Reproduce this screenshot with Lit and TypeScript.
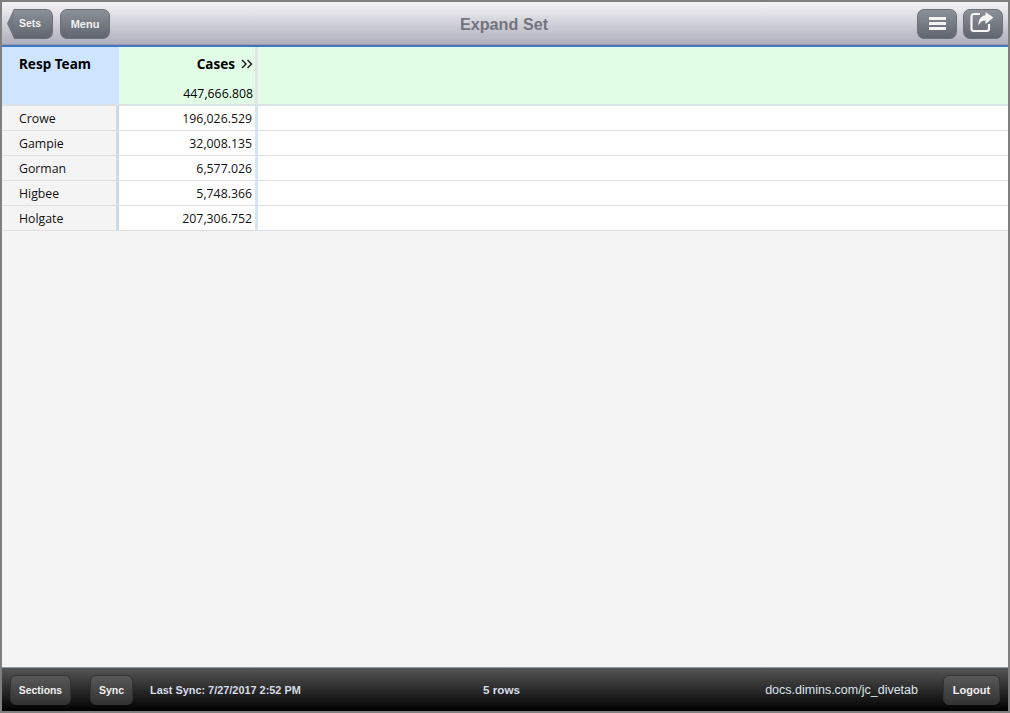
import { LitElement, html, css } from "lit";
import { customElement } from "lit/decorators.js";

const rows = [
  ["Crowe", "196,026.529"],
  ["Gampie", "32,008.135"],
  ["Gorman", "6,577.026"],
  ["Higbee", "5,748.366"],
  ["Holgate", "207,306.752"],
];

@customElement("app-root")
export class AppRoot extends LitElement {
  static styles = css`
    :host { display: flex; flex-direction: column; box-sizing: border-box; width: 1010px; height: 713px; border: 2px solid #7f7f7f; background: #f4f4f4; font-family: "Open Sans", "Noto Sans", sans-serif; overflow: hidden; }
    .top { height: 43px; flex: none; display: flex; align-items: center; justify-content: space-between; padding: 0 5px 0 6px; background: linear-gradient(#f3f3f6, #aeaebc); border-bottom: 2px solid #3f78c4; box-shadow: inset 0 -1px 0 #9a9aa8; position: relative; font-family: "Liberation Sans", Arial, sans-serif; }
    .group { display: flex; gap: 7px; align-items: center; }
    .group.end { gap: 6px; }
    .title { position: absolute; left: 0; right: 0; top: 13px; text-align: center; font-size: 16.2px; font-weight: 700; color: #74747f; line-height: 18px; padding-right: 2px; }
    .tbtn { position: relative; z-index: 1; box-sizing: border-box; height: 30px; border: 1px solid #6c7078; border-radius: 7px; background: linear-gradient(#8c9098, #61656f); color: #f2f2f2; font-size: 11px; font-weight: 700; display: flex; align-items: center; justify-content: center; }
    .back { width: 39px; margin-left: 6px; padding-left: 5px; justify-content: flex-start; border-left: none; border-radius: 0 7px 7px 0; font-size: 10.4px; }
    .back::before { content: ""; position: absolute; left: -7px; top: -1px; width: 7px; height: 30px; clip-path: polygon(100% 0, 0 50%, 100% 100%); background: linear-gradient(#7e828b, #666a74); }
    .menu { width: 50px; }
    .icon { width: 40px; }
    .share { padding: 0 2px 4px 0; }
    svg { display: block; }
    .head { display: grid; grid-template-columns: 117px 136px 3px 1fr; height: 59px; flex: none; background: #e2fde5; border-bottom: 2px solid #dde2e6; box-sizing: border-box; color: #000; }
    .h1 { background: #cfe4ff; padding: 7px 0 0 17px; font-family: "Noto Sans", sans-serif; font-size: 13.5px; font-weight: 700; line-height: 20px; }
    .h2 { display: flex; flex-direction: column; justify-content: space-between; align-items: flex-end; padding: 7px 2px 1px 0; }
    .name { font-family: "Noto Sans", sans-serif; font-size: 13.5px; font-weight: 700; display: flex; align-items: center; gap: 6px; line-height: 20px; }
    .total { font-size: 12.3px; line-height: 18px; }
    .hsep { background: #e3e6e4; }
    .row { display: grid; grid-template-columns: 114px 3px 136px 3px 1fr; grid-template-rows: 24px; height: 25px; box-sizing: border-box; border-bottom: 1px solid #dfdfdf; background: #fff; font-size: 12.3px; line-height: 26px; color: #111; }
    .c1 { background: #f4f4f4; padding-left: 17px; }
    .sep1 { background: #ccdbe6; }
    .c2 { text-align: right; padding-right: 3px; }
    .sep2 { background: #d4e6f6; }
    .body { flex: 1; }
    .bottom { height: 44px; flex: none; box-sizing: border-box; border-top: 1px solid #8f97a3; background: linear-gradient(#555, #000); display: grid; grid-template-columns: 1fr auto 1fr; align-items: center; padding: 1px 8px 0; color: #d6dde6; font-family: "Liberation Sans", Arial, sans-serif; font-size: 10.9px; font-weight: 700; }
    .left, .right { display: flex; align-items: center; }
    .right { justify-content: flex-end; }
    .bbtn { box-sizing: border-box; height: 30px; border: 1px solid #333; border-radius: 6px; background: linear-gradient(#585858, #333); color: #f0f0f0; display: flex; align-items: center; justify-content: center; }
    .sections { width: 61px; margin-right: 19px; font-size: 10.4px; }
    .sync { width: 43px; margin-right: 17px; font-size: 10.5px; }
    .url { font-weight: 400; font-size: 12.5px; margin-right: 25px; color: #dde4ec; }
    .logout { width: 57px; font-size: 11px; }
    .rows5 { font-size: 11.7px; margin: -1px 0 0 -7px; }
  `;

  render() {
    return html`
      <div class="top">
        <div class="title">Expand Set</div>
        <div class="group">
          <div class="tbtn back">Sets</div>
          <div class="tbtn menu">Menu</div>
        </div>
        <div class="group end">
          <div class="tbtn icon">
            <svg width="17" height="13" viewBox="0 0 17 13" fill="#f4f4f4"><rect width="17" height="3"/><rect y="5" width="17" height="3"/><rect y="10" width="17" height="3"/></svg>
          </div>
          <div class="tbtn icon share">
            <svg width="24" height="20" viewBox="0 0 24 20" fill="none">
              <path d="M10 2H4A2.500 2.500 0 0 0 1.500 4.500v12A2.500 2.500 0 0 0 4 19h12.500a2.500 2.500 0 0 0 2.500-2.500V12" stroke="#f6f6f6" stroke-width="2.200"/>
              <path d="M15.500 0l8 5.500-8 6.500V8.500c-3.500 0-5.500 1.500-7 5C8 8 11 3.500 15.500 3.200z" fill="#f6f6f6"/>
            </svg>
          </div>
        </div>
      </div>
      <div class="head">
        <div class="h1">Resp Team</div>
        <div class="h2">
          <div class="name">Cases
            <svg width="12" height="10" viewBox="0 0 12 10" fill="none" stroke="#222" stroke-width="1.500"><path d="M1 1l4 4-4 4M6.500 1l4 4-4 4"/></svg>
          </div>
          <div class="total">447,666.808</div>
        </div>
        <div class="hsep"></div>
        <div></div>
      </div>
      ${rows.map(
        ([a, b]) => html`<div class="row">
          <div class="c1">${a}</div><div class="sep1"></div>
          <div class="c2">${b}</div><div class="sep2"></div><div></div>
        </div>`
      )}
      <div class="body"></div>
      <div class="bottom">
        <div class="left">
          <div class="bbtn sections">Sections</div>
          <div class="bbtn sync">Sync</div>
          <span>Last Sync: 7/27/2017 2:52 PM</span>
        </div>
        <div class="rows5">5 rows</div>
        <div class="right">
          <span class="url">docs.dimins.com/jc_divetab</span>
          <div class="bbtn logout">Logout</div>
        </div>
      </div>
    `;
  }
}
